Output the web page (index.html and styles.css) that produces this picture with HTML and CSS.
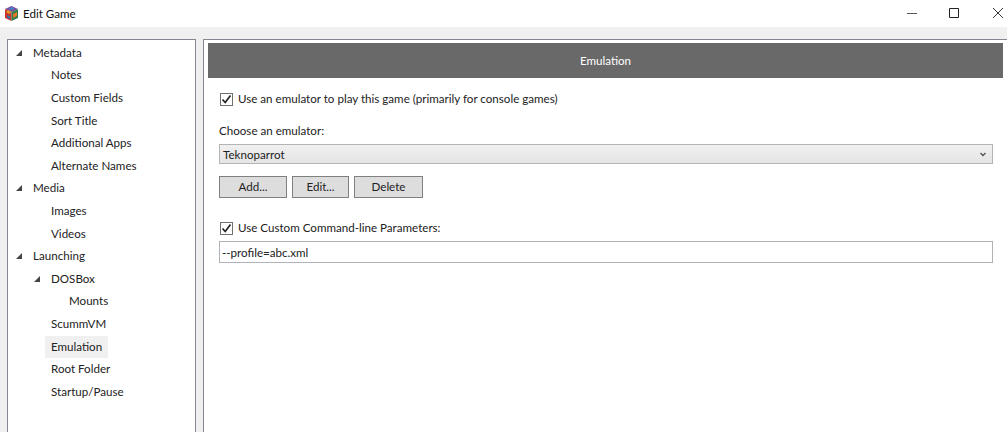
FILE: index.html
```html
<!DOCTYPE html>
<html lang="en">
<head>
<meta charset="utf-8">
<title>Edit Game</title>
<link rel="stylesheet" href="styles.css">
</head>
<body>
<div class="window">
  <header class="titlebar">
    <svg class="app-icon" width="13" height="15" viewBox="0 0 13 15">
      <path d="M6.500 0 13 3 6.500 6 0 3Z" fill="#7d4aa0"/>
      <path d="M0 3 6.500 6V15L0 12Z" fill="#c8342c"/>
      <path d="M6.500 6 13 3V12L6.500 15Z" fill="#2f7d4a"/>
      <path d="M3 4 6.500 6 4 8 1 6Z" fill="#e09a2a"/>
      <path d="M8 8 12 6V10L8 12Z" fill="#e2762a"/>
      <path d="M2 9 5 10.500V13L2 11.500Z" fill="#2e6fb0"/>
      <path d="M6.500 1 9.500 2.500 6.500 4 3.500 2.500Z" fill="#3f88c5"/>
    </svg>
    <span class="title">Edit Game</span>
    <div class="controls">
      <svg width="10" height="10" viewBox="0 0 10 10"><path d="M0 5.500H10" stroke="#555" fill="none"/></svg>
      <svg width="10" height="10" viewBox="0 0 10 10"><path d="M.5 .5H9.500V9.500H.5Z" stroke="#222" fill="none"/></svg>
      <svg class="close" width="10" height="10" viewBox="0 0 10 10"><path d="M0 0 10 10M10 0 0 10" stroke="#333" fill="none"/></svg>
    </div>
  </header>
  <div class="content">
    <nav class="tree">
      <div class="row l0"><span class="arrow"></span><span class="label">Metadata</span></div>
      <div class="row l1"><span class="label">Notes</span></div>
      <div class="row l1"><span class="label">Custom Fields</span></div>
      <div class="row l1"><span class="label">Sort Title</span></div>
      <div class="row l1"><span class="label">Additional Apps</span></div>
      <div class="row l1"><span class="label">Alternate Names</span></div>
      <div class="row l0"><span class="arrow"></span><span class="label">Media</span></div>
      <div class="row l1"><span class="label">Images</span></div>
      <div class="row l1"><span class="label">Videos</span></div>
      <div class="row l0"><span class="arrow"></span><span class="label">Launching</span></div>
      <div class="row l1"><span class="arrow"></span><span class="label">DOSBox</span></div>
      <div class="row l2"><span class="label">Mounts</span></div>
      <div class="row l1"><span class="label">ScummVM</span></div>
      <div class="row l1"><span class="label selected">Emulation</span></div>
      <div class="row l1"><span class="label">Root Folder</span></div>
      <div class="row l1"><span class="label">Startup/Pause</span></div>
    </nav>
    <main class="panel">
      <h1 class="panel-title">Emulation</h1>
      <div class="form">
        <label class="check first">
          <span class="box"><svg width="11" height="11" viewBox="0 0 11 11"><path d="M1.500 5.500 4.200 8.500 9.500 1.500" stroke="#222" stroke-width="1.700" fill="none"/></svg></span>
          <span>Use an emulator to play this game (primarily for console games)</span>
        </label>
        <div class="field-label">Choose an emulator:</div>
        <div class="select">
          <span>Teknoparrot</span>
          <svg width="6" height="5" viewBox="0 0 6 5"><path d="M.5 1 3 3.500 5.500 1" stroke="#555" stroke-width="1.400" fill="none"/></svg>
        </div>
        <div class="buttons">
          <button class="btn add">Add...</button>
          <button class="btn edit">Edit...</button>
          <button class="btn del">Delete</button>
        </div>
        <label class="check second">
          <span class="box"><svg width="11" height="11" viewBox="0 0 11 11"><path d="M1.500 5.500 4.200 8.500 9.500 1.500" stroke="#222" stroke-width="1.700" fill="none"/></svg></span>
          <span>Use Custom Command-line Parameters:</span>
        </label>
        <div class="input">--profile=abc.xml</div>
      </div>
    </main>
  </div>
</div>
</body>
</html>
```
FILE: styles.css
```css
* { box-sizing: border-box; }
html, body { margin: 0; height: 100%; overflow: hidden; }
body { font: 11.6px/16px Lato, "Open Sans", sans-serif; color: #222; background: #f0f0f0; }
.window { width: 1007px; height: 432px; display: flex; flex-direction: column; }

.titlebar { height: 27px; background: #fff; display: flex; align-items: center; padding-left: 5px; flex: none; }
.app-icon { margin-right: 5px; }
.title { color: #111; }
.controls { margin-left: auto; display: flex; gap: 32px; padding-right: 4px; margin-top: -2px; }
.close { margin-left: 2px; }

.content { flex: 1; display: flex; padding: 12px 0 0 7px; gap: 7px; min-height: 0; }

.tree { width: 189px; background: #fff; border: 1px solid #828790; border-bottom: 0; padding-top: 1.600px; }
.row { height: 22.6px; display: flex; align-items: center; position: relative; }
.l0 { padding-left: 19px; }
.l1 { padding-left: 37px; }
.l2 { padding-left: 55px; }
.label { padding: 0 6px; height: 22px; line-height: 22px; }
.selected { background: #f0f0f0; }
.arrow { position: absolute; width: 0; height: 0; margin-left: -11px; border-style: solid; border-width: 0 0 6px 6px; border-color: transparent transparent #444 transparent; }

.panel { flex: 1; background: #fff; border: 1px solid #828790; border-width: 1px 0 0 1px; padding: 3px 4px 0 4px; }
.panel-title { margin: 0; height: 35px; background: #696969; color: #fff; font-size: 11.6px; font-weight: 400; line-height: 35px; text-align: center; }
.form { padding: 0 10px 0 11px; }

.check { display: flex; align-items: center; gap: 5px; height: 16px; padding-left: 1px; }
.first { margin-top: 13px; }
.second { margin-top: 22px; }
.box { width: 13px; height: 13px; border: 1px solid #707070; background: #fff; display: flex; align-items: center; justify-content: center; }
.field-label { margin-top: 16px; }
.select { margin-top: 5px; height: 20px; border: 1px solid #b4b4b4; background: linear-gradient(#f0f0f0, #e5e5e5); display: flex; align-items: center; justify-content: space-between; padding: 1px 6px 0 3px; }
.buttons { display: flex; gap: 5px; margin-top: 12px; }
.btn { height: 22px; padding: 0; font: inherit; color: #222; background: #dddddd; border: 1px solid #808080; }
.add { width: 68px; }
.edit { width: 57px; }
.del { width: 69px; }
.input { margin-top: 5px; height: 22px; border: 1px solid #b0b2b8; background: #fff; padding-left: 2px; line-height: 21px; }
```
